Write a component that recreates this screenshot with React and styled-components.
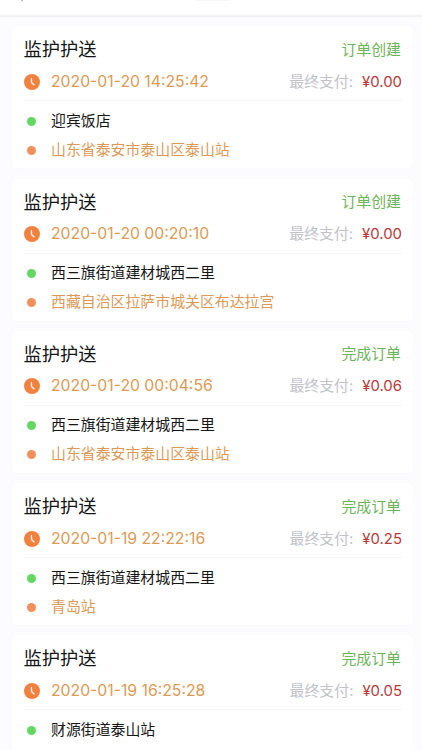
import React from 'react';
import styled, { createGlobalStyle } from 'styled-components';

const orders = [
  {
    status: '订单创建',
    time: '2020-01-20 14:25:42',
    price: '¥0.00',
    from: '迎宾饭店',
    to: '山东省泰安市泰山区泰山站',
  },
  {
    status: '订单创建',
    time: '2020-01-20 00:20:10',
    price: '¥0.00',
    from: '西三旗街道建材城西二里',
    to: '西藏自治区拉萨市城关区布达拉宫',
  },
  {
    status: '完成订单',
    time: '2020-01-20 00:04:56',
    price: '¥0.06',
    from: '西三旗街道建材城西二里',
    to: '山东省泰安市泰山区泰山站',
  },
  {
    status: '完成订单',
    time: '2020-01-19 22:22:16',
    price: '¥0.25',
    from: '西三旗街道建材城西二里',
    to: '青岛站',
  },
  {
    status: '完成订单',
    time: '2020-01-19 16:25:28',
    price: '¥0.05',
    from: '财源街道泰山站',
  },
];

function App() {
  return (
    <Page>
      <GlobalStyle />
      <Header>
        <BackTip />
        <TitleTip />
      </Header>
      <OrderList>
        {orders.map(order => <OrderCard key={order.time} order={order} />)}
      </OrderList>
    </Page>
  );
}

function OrderCard({ order }) {
  return (
    <Card>
      <TitleRow>
        <Title>监护护送</Title>
        <Status>{order.status}</Status>
      </TitleRow>
      <TimeRow>
        <ClockIcon viewBox="0 0 16 16">
          <circle cx="8" cy="8" r="8" fill="#f2803e" />
          <path d="M7.5 4.7V8.5L10.1 10.9" fill="none" stroke="#fff" strokeWidth="1.3" strokeLinecap="round" />
        </ClockIcon>
        <Time>{order.time}</Time>
        <PayLabel>最终支付:</PayLabel>
        <Price>{order.price}</Price>
      </TimeRow>
      <Places>
        <Place>
          <Dot color="#62d862" />
          <PlaceName color="#161616">{order.from}</PlaceName>
        </Place>
        {order.to && (
          <Place>
            <Dot color="#f0905a" />
            <PlaceName color="#dc9a58">{order.to}</PlaceName>
          </Place>
        )}
      </Places>
    </Card>
  );
}

const GlobalStyle = createGlobalStyle`
  * {
    box-sizing: border-box;
  }

  body {
    margin: 0;
    background: #fcfcff;
    font-family: Inter, "Noto Sans CJK SC", sans-serif;
  }
`;

const Page = styled.div`
  height: 750px;
  overflow: hidden;
`;

const Header = styled.header`
  display: flex;
  height: 17px;
  padding-left: 21px;
  background: #fff;
  border-bottom: 2px solid #f1f1f4;
`;

const BackTip = styled.div`
  width: 2px;
  height: 1px;
  background: #bbb;
`;

const TitleTip = styled.div`
  width: 34px;
  height: 1px;
  margin-left: 173px;
  background: #f6f6f6;
`;

const OrderList = styled.main`
  display: flex;
  flex-direction: column;
  gap: 10.25px;
  padding: 9.25px 9px 0 12px;
`;

const Card = styled.section`
  flex: none;
  height: 142px;
  padding: 10px 11px 0 11.5px;
  background: #fff;
  border-radius: 5px;
  box-shadow: 0 0 4px rgba(240, 240, 255, 0.3);
`;

const TitleRow = styled.div`
  display: flex;
  align-items: center;
  justify-content: space-between;
  height: 27px;
  padding-right: 1px;
`;

const Title = styled.h2`
  margin: 0;
  color: #151515;
  font-size: 18.3px;
  font-weight: 400;
  line-height: 27px;
`;

const Status = styled.span`
  padding-top: 1px;
  color: #6fb35b;
  font-size: 14.9px;
  line-height: 27px;
`;

const TimeRow = styled.div`
  display: flex;
  align-items: center;
  height: 38px;
  border-bottom: 1px solid #f6f6f8;
`;

const ClockIcon = styled.svg`
  width: 16px;
  height: 16px;
  margin-right: 11.5px;
`;

const Time = styled.time`
  flex: 1;
  color: #dc9a55;
  font-size: 15.75px;
  line-height: 20px;
`;

const PayLabel = styled.span`
  margin-right: 9px;
  color: #c2c2cb;
  font-size: 14.9px;
  line-height: 22px;
`;

const Price = styled.span`
  color: #b73b3d;
  font-size: 14.9px;
  line-height: 20px;
`;

const Places = styled.div`
  padding-top: 5.5px;
`;

const Place = styled.div`
  display: flex;
  align-items: center;
  height: 29px;
  padding-left: 3.5px;
`;

const Dot = styled.i`
  width: 9px;
  height: 9px;
  margin-right: 15px;
  border-radius: 50%;
  background: ${props => props.color};
`;

const PlaceName = styled.span`
  color: ${props => props.color};
  font-size: 14.9px;
  line-height: 29px;
`;

export default App;
